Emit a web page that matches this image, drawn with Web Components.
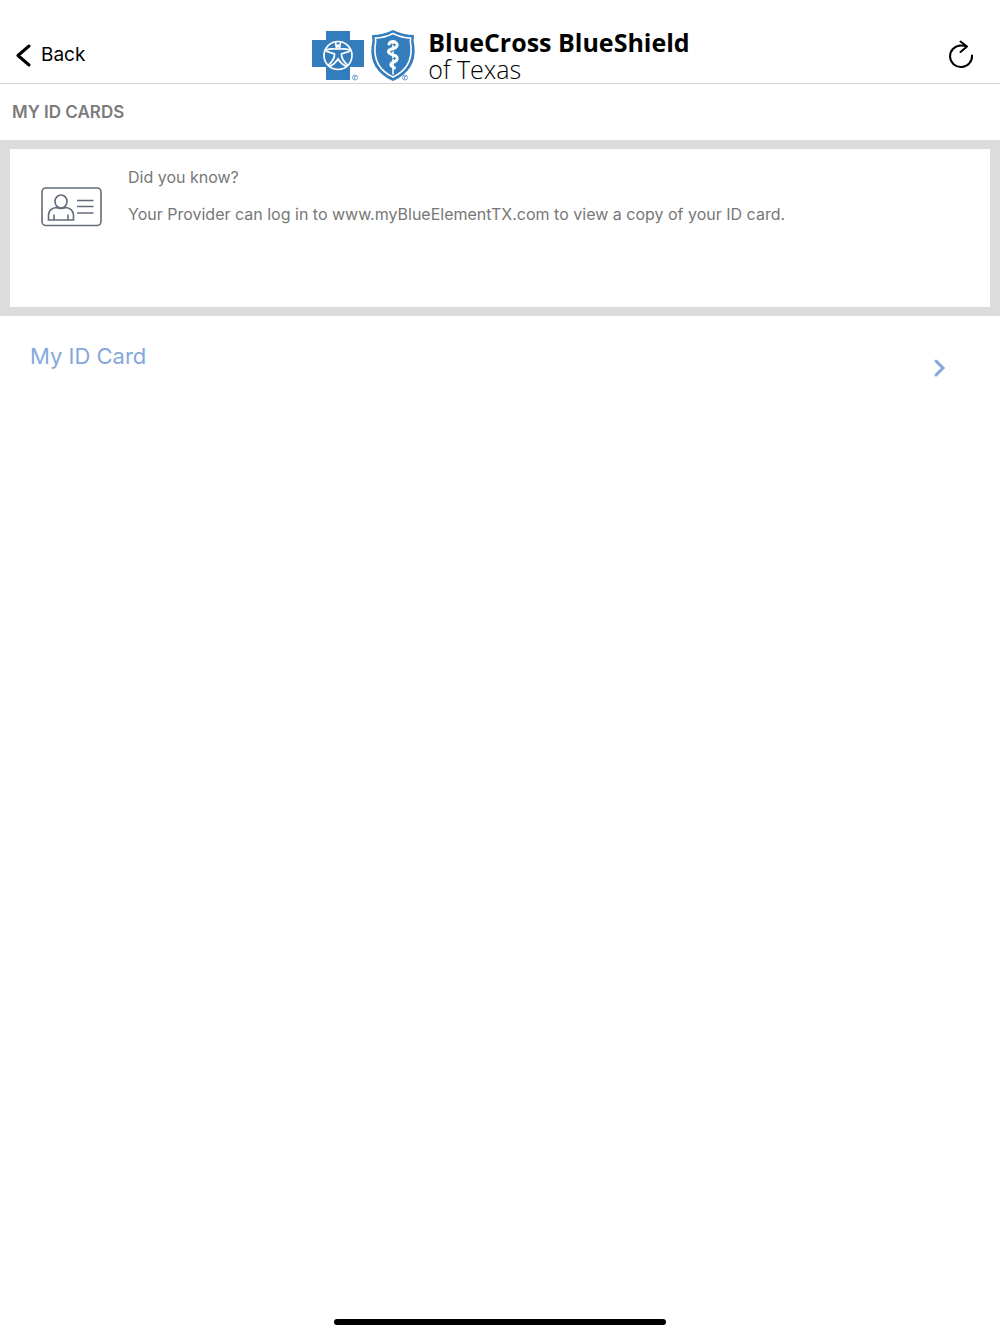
<!DOCTYPE html>
<html lang="en">
<head>
<meta charset="utf-8">
<meta name="viewport" content="width=device-width, initial-scale=1">
<title>My ID Cards</title>
<style>
    body {
        margin: 0;
        background: #fff;
        color: #000;
        font-family: Inter, "Liberation Sans", sans-serif;
    }
</style>
</head>
<body>

<id-cards-app>
    <app-header slot="header">
        <nav-button slot="start" icon="back">Back</nav-button>
        <brand-logo>
            <span slot="name">BlueCross BlueShield</span>
            <span slot="region">of Texas</span>
        </brand-logo>
        <nav-button slot="end" icon="reload" label="Reload"></nav-button>
    </app-header>
    <section-title>MY ID CARDS</section-title>
    <info-panel>
        <span slot="title">Did you know?</span>
        Your Provider can log in to www.myBlueElementTX.com to view a copy of your ID card.
    </info-panel>
    <card-link href="#id-card">My ID Card</card-link>
</id-cards-app>

<script>
const define = (name, html, setup) => {
    const template = document.createElement('template');
    template.innerHTML = html;

    customElements.define(name, class extends HTMLElement {
        constructor() {
            super();
            this.attachShadow({mode: 'open'});
            this.shadowRoot.appendChild(template.content.cloneNode(true));
        }

        connectedCallback() {
            if (setup) setup(this, this.shadowRoot);
        }
    });
};

define('id-cards-app', `
    <style>
        :host {
            display: flex;
            flex-direction: column;
            min-height: 100vh;
        }

        main {
            flex: 1;
        }

        footer {
            display: flex;
            justify-content: center;
            padding: 9px 0;
        }

        .indicator {
            width: 332px;
            max-width: 60%;
            height: 6px;
            border-radius: 3px;
            background: #000;
        }
    </style>

    <slot name="header"></slot>
    <main><slot></slot></main>
    <footer><div class="indicator"></div></footer>
`);

define('app-header', `
    <style>
        :host {
            display: block;
            border-bottom: 1px solid #d3d3d3;
        }

        header {
            display: grid;
            grid-template-columns: 1fr auto 1fr;
            align-items: center;
            padding: 28px 16px 1px;
        }

        .end {
            justify-self: end;
            padding-right: 8px;
        }
    </style>

    <header>
        <div><slot name="start"></slot></div>
        <slot></slot>
        <div class="end"><slot name="end"></slot></div>
    </header>
`);

const icons = {
    back: `<svg width="16" height="24" viewBox="0 0 16 24" fill="none" stroke="#000" stroke-width="3" stroke-linecap="round" stroke-linejoin="round">
        <path d="M13 3 2 12.500 13 22"/></svg>`,
    reload: `<svg width="28" height="30" viewBox="0 0 28 30" fill="none" stroke="#000" stroke-width="2" stroke-linecap="round" stroke-linejoin="round">
        <path d="M24 15.500A11 10.800 0 1 1 13 5.500Q16 5.500 19 6.500M12.500 1.500 19 6.500 12.500 12"/></svg>`
};

define('nav-button', `
    <style>
        :host {
            display: block;
        }

        button {
            display: flex;
            align-items: center;
            gap: 9px;
            padding: 0;
            border: none;
            background: none;
            color: inherit;
            font: 19px/24px Inter, "Liberation Sans", sans-serif;
        }

        .icon, svg {
            display: block;
        }
    </style>

    <button type="button"><span class="icon"></span><slot></slot></button>
`, (host, root) => {
    root.querySelector('.icon').innerHTML = icons[host.getAttribute('icon')];
    if (host.hasAttribute('label')) {
        root.querySelector('button').setAttribute('aria-label', host.getAttribute('label'));
    }
});

define('brand-logo', `
    <style>
        :host {
            display: flex;
            align-items: center;
            gap: 12px;
            font-family: "Open Sans", "Noto Sans", sans-serif;
            white-space: nowrap;
        }

        svg {
            display: block;
        }

        .name {
            font-size: 25px;
            line-height: 28px;
            font-weight: 700;
        }

        .region {
            font-size: 25px;
            line-height: 26px;
            font-weight: 300;
        }
    </style>

    <svg width="106" height="54" viewBox="0 0 106 54" aria-hidden="true">
        <path fill="#337dbd" d="M16 3H40V12H54V39H40V52H16V39H2V12H16Z"/>
        <g fill="none" stroke="#fff" stroke-width="1.700">
            <circle cx="28" cy="27.500" r="14"/>
            <path d="M15.500 22Q21 20.500 25 21H31Q35 20.500 40.500 22M15.500 23 24.500 26Q25 31 18.500 37M40.500 23 31.500 26Q31 31 37.500 37M19.500 38.500Q25 36 28 31Q31 36 36.500 38.500M25.500 14 26.500 20.500M30.500 14 29.500 20.500"/>
        </g>
        <circle cx="28" cy="18" r="1.800" fill="#fff"/>
        <path fill="#337dbd" d="M62 7Q73 7 83 2Q93 7 104 7Q103 12 104.500 19C106 34 99 46 83 53C67 46 60 34 61.500 19Q63 12 62 7Z"/>
        <path fill="none" stroke="#fff" stroke-width="1.600" d="M65.500 10Q74 10 83 5.500Q92 10 100.500 10Q100 14 101 19C102 33 96 43 83 49C70 43 64 33 65 19Q66 14 65.500 10Z"/>
        <path stroke="#fff" stroke-width="1.600" stroke-linecap="round" d="M83 13V46"/>
        <path fill="none" stroke="#fff" stroke-width="3" stroke-linecap="round" stroke-linejoin="round" d="M79 16Q81 12.500 85 14Q89.500 17 85 20Q77 21.500 79 25Q82 27 86 28Q89 31 85 33.500Q80 35 81 37.500L84.500 40"/>
        <path fill="none" stroke="#337dbd" d="M82.500 16.500H85M82 23H84.500M82.500 30.500H85"/>
        <g fill="none" stroke="#6ea3d2" stroke-width="1">
            <circle cx="45" cy="49.500" r="2.500"/>
            <circle cx="95" cy="49.500" r="2.500"/>
            <path d="M44.500 51V48.500H46M94.500 51V48.500H96"/>
        </g>
    </svg>
    <div>
        <div class="name"><slot name="name"></slot></div>
        <div class="region"><slot name="region"></slot></div>
    </div>
`);

define('section-title', `
    <style>
        :host {
            display: block;
            padding: 16px 12px;
        }

        h1 {
            margin: 0;
            color: #7b7b7b;
            font-size: 17px;
            line-height: 24px;
            font-weight: 600;
        }
    </style>

    <h1><slot></slot></h1>
`);

define('info-panel', `
    <style>
        :host {
            display: block;
            padding: 9px 10px;
            background: #dcdcdc;
        }

        section {
            display: flex;
            align-items: flex-start;
            gap: 26px;
            min-height: 142px;
            padding: 16px 31px 0;
            background: #fff;
            color: #777;
            font-size: 16px;
            line-height: 24px;
        }

        svg {
            flex: none;
            margin-top: 21px;
        }

        h2, p {
            margin: 0;
            font-size: inherit;
            font-weight: 400;
        }

        h2 {
            margin-bottom: 13px;
        }
    </style>

    <section>
        <svg width="61" height="42" viewBox="0 0 61 42" fill="none" stroke="#636b7b" stroke-width="1.600" aria-hidden="true">
            <rect x="1" y="2" width="59" height="37.500" rx="4"/>
            <ellipse cx="20" cy="15.500" rx="6" ry="6.500"/>
            <path d="M7.500 34V29Q8 22.500 15 21.500Q20 23.500 25 21.500Q32 22.500 32.500 29V34ZM13 34V28.500M27 34V28.500M36 14.500H52.500M36 20.500H52.500M36 27H52.500"/>
        </svg>
        <div>
            <h2><slot name="title"></slot></h2>
            <p><slot></slot></p>
        </div>
    </section>
`);

define('card-link', `
    <style>
        :host {
            display: block;
        }

        a {
            display: flex;
            justify-content: space-between;
            padding: 26px 53px 24px 30px;
            color: #85a8dc;
            font-size: 22px;
            line-height: 28px;
            text-decoration: none;
        }

        svg {
            margin-top: 16px;
        }
    </style>

    <a><slot></slot>
        <svg width="14" height="20" viewBox="0 0 14 20" fill="none" stroke="currentColor" stroke-width="3" stroke-linecap="round" aria-hidden="true">
            <path d="M3 3 10 10 3 17"/>
        </svg>
    </a>
`, (host, root) => {
    root.querySelector('a').href = host.getAttribute('href');
});
</script>
</body>
</html>
